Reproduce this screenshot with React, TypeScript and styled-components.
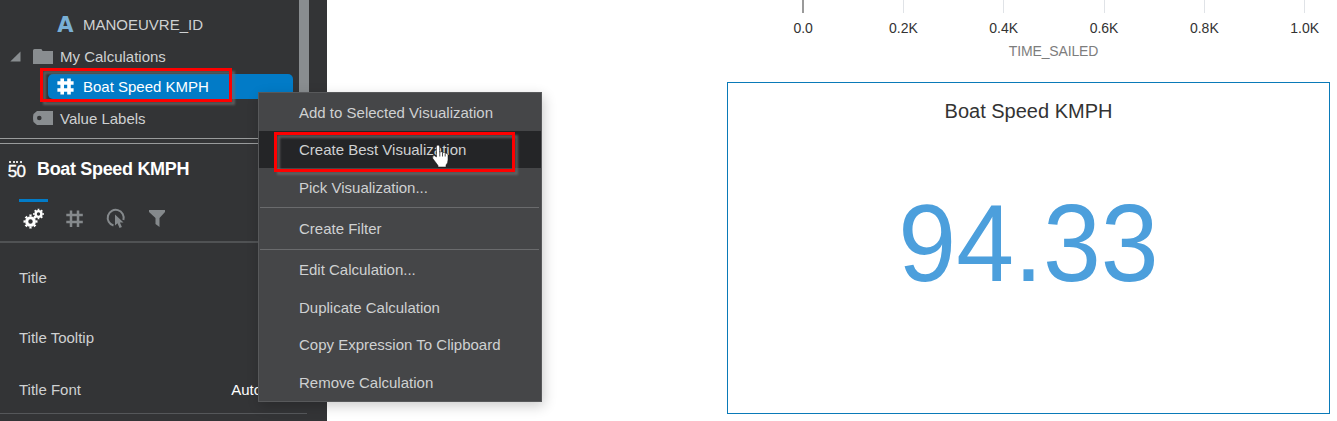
import React from "react";
import styled, { createGlobalStyle } from "styled-components";

const GlobalStyle = createGlobalStyle`
  * { box-sizing: border-box; }
  body { margin: 0; background: #fff; overflow: hidden; font-family: "Liberation Sans", Arial, sans-serif; font-size: 15px; }
  svg { display: block; flex: none; }
`;

const Page = styled.div`
  position: relative;
  display: flex;
  width: 1337px;
  height: 421px;
  overflow: hidden;
`;

const Sidebar = styled.aside`
  display: flex;
  flex-direction: column;
  width: 327px;
  height: 421px;
  background: #333436;
  overflow: hidden;
`;

const TreePanel = styled.div`
  display: flex;
  height: 139px;
  flex: none;
  border-bottom: 1px solid #999b9c;
`;

const Tree = styled.div`
  width: 299px;
  padding-top: 8px;
`;

const ScrollThumb = styled.div`
  width: 10px;
  background: #898d90;
`;

const TreeRow = styled.div<{ $indent: number; $height?: number }>`
  display: flex;
  align-items: center;
  height: ${(p) => p.$height ?? 32}px;
  padding-left: ${(p) => p.$indent}px;
  color: #cfd1d2;
`;

const TreeIcon = styled.span<{ $gap: number }>`
  display: flex;
  margin-right: ${(p) => p.$gap}px;
`;

const TextTypeIcon = styled.span`
  width: 17px;
  margin-right: 9px;
  text-align: center;
  font: bold 21px/20px "DejaVu Sans", sans-serif;
  color: #7ab0d6;
`;

const SelectedRow = styled.div`
  display: flex;
  align-items: center;
  width: 245px;
  height: 25px;
  margin: 2px 0 3px 48px;
  padding-left: 9px;
  border-radius: 5px;
  background: #027bc7;
  color: #fff;
`;

const Splitter = styled.div`
  height: 5px;
  flex: none;
  border-bottom: 1px solid #999b9c;
`;

const Heading = styled.div`
  display: flex;
  align-items: center;
  height: 51px;
  padding-left: 7px;
  flex: none;
  color: #fff;
  font-size: 18px;
  font-weight: bold;
  letter-spacing: -0.33px;
`;

const MetricIcon = styled.span`
  display: flex;
  flex-direction: column;
  align-items: center;
  width: 19px;
  margin-right: 11px;
  font-size: 17px;
  line-height: 13px;
  font-weight: normal;
  letter-spacing: -0.8px;
  -webkit-text-stroke: 0.3px #fff;
`;

const MetricDots = styled.i`
  width: 13px;
  height: 2px;
  margin: 0 3px 2px 0;
  background: repeating-linear-gradient(90deg, #ddd 0 2px, transparent 2px 3.6px);
`;

const TabBar = styled.div`
  display: flex;
  height: 48px;
  padding: 4px 0 0 19px;
  flex: none;
  border-bottom: 2px solid #505254;
`;

const Tab = styled.div<{ $active?: boolean }>`
  display: flex;
  justify-content: center;
  width: 29px;
  height: 42px;
  padding-top: 6px;
  margin-right: 12px;
  border-top: 3px solid ${(p) => (p.$active ? "#027bc7" : "transparent")};
  color: ${(p) => (p.$active ? "#fff" : "#85898c")};
`;

const Setting = styled.div<{ $height: number; $ruled?: boolean }>`
  display: flex;
  align-items: center;
  justify-content: space-between;
  width: 307px;
  height: ${(p) => p.$height}px;
  padding: ${(p) => (p.$ruled ? 2 : 0)}px 45px 0 19px;
  flex: none;
  border-bottom: ${(p) => (p.$ruled ? "1px solid #55575a" : "none")};
  color: #cfd1d2;
`;

const SettingValue = styled.span`
  color: #fff;
`;

const Canvas = styled.main`
  display: flex;
  flex-direction: column;
  flex: 1;
  min-width: 0;
  overflow: hidden;
`;

const Axis = styled.div`
  display: grid;
  grid-template-columns: repeat(6, 100.3px);
  margin-left: 426px;
  height: 42px;
`;

const Tick = styled.div<{ $strong?: boolean }>`
  display: flex;
  flex-direction: column;
  align-items: center;
  font-size: 14px;
  line-height: 16px;
  color: #333;
  &::before {
    content: "";
    width: ${(p) => (p.$strong ? 2 : 1)}px;
    height: 13px;
    margin-bottom: 7px;
    background: ${(p) => (p.$strong ? "#9a9a9a" : "#e0e3e7")};
  }
`;

const AxisTitle = styled.div`
  width: 603px;
  height: 40px;
  margin-left: 425px;
  text-align: center;
  font-size: 14px;
  line-height: 18px;
  letter-spacing: -0.15px;
  color: #7d7d7d;
`;

const Tile = styled.section`
  display: flex;
  flex-direction: column;
  align-items: center;
  width: 603px;
  height: 332px;
  margin-left: 400px;
  border: 1px solid #0a7ab8;
`;

const TileTitle = styled.div`
  margin-top: 16px;
  font-size: 20px;
  line-height: 24px;
  color: #333;
`;

const TileValue = styled.div`
  margin-top: 62px;
  font-size: 104px;
  line-height: 120px;
  color: #4c9fdc;
  transform: scaleY(1.045);
  transform-origin: 50% 94px;
`;

const Menu = styled.div`
  position: absolute;
  left: 258px;
  top: 92px;
  width: 284px;
  height: 310px;
  border: 1px solid #58595b;
  background: #454648;
  box-shadow: 2px 4px 12px rgba(0, 0, 0, 0.2);
`;

const MenuItem = styled.div<{ $active?: boolean }>`
  display: flex;
  align-items: center;
  height: 37.6px;
  padding: 1px 0 0 40px;
  background: ${(p) => (p.$active ? "#242527" : "transparent")};
  color: #cfd1d2;
`;

const MenuRule = styled.div`
  height: 1px;
  margin: 1px 2px 1px 1px;
  background: #6a6b6d;
  & ~ & {
    margin-top: 2.4px;
    margin-bottom: 0.6px;
  }
`;

const Highlight = styled.div<{ $x: number; $y: number; $w: number; $h: number }>`
  position: absolute;
  left: ${(p) => p.$x}px;
  top: ${(p) => p.$y}px;
  width: ${(p) => p.$w}px;
  height: ${(p) => p.$h}px;
  border: 3px solid #fe0000;
  filter: drop-shadow(3px 3px 1px rgba(105, 105, 105, 0.75));
`;

const Pointer = styled.svg`
  position: absolute;
  left: 432px;
  top: 144px;
`;

const Hash = ({ size, weight }: { size: number; weight: number }) => (
  <svg width={size} height={size} viewBox="0 0 17 17" fill="none" stroke="currentColor" strokeWidth={weight}>
    <path d="M5.2 .5v16M12 .5v16M.4 5h16.2M.4 12h16.2" />
  </svg>
);

const Gear = ({ x, y, r }: { x: number; y: number; r: number }) => (
  <g transform={`translate(${x} ${y})`} fill="none" stroke="#fff">
    <circle r={r * 0.56} strokeWidth={r * 0.46} />
    <circle r={r * 0.88} strokeWidth={r * 0.3} pathLength="16" strokeDasharray="1 1" strokeDashoffset=".5" />
  </g>
);

const ticks = ["0.0", "0.2K", "0.4K", "0.6K", "0.8K", "1.0K"];

export default function App() {
  return (
    <Page>
      <GlobalStyle />
      <Sidebar>
        <TreePanel>
          <Tree>
            <TreeRow $indent={57} $height={33}>
              <TextTypeIcon>A</TextTypeIcon>
              MANOEUVRE_ID
            </TreeRow>
            <TreeRow $indent={10} $height={31}>
              <TreeIcon $gap={12}>
                <svg width="11" height="11"><path d="M10.5 .5v10H.3z" fill="#898d90" /></svg>
              </TreeIcon>
              <TreeIcon $gap={7}>
                <svg width="20" height="15"><path d="M0 1.5Q0 0 1.5 0H8q1 0 1.5 2H20v13H0z" fill="#898d90" /></svg>
              </TreeIcon>
              My Calculations
            </TreeRow>
            <SelectedRow>
              <TreeIcon $gap={9}><Hash size={17} weight={3.6} /></TreeIcon>
              Boat Speed KMPH
            </SelectedRow>
            <TreeRow $indent={33}>
              <TreeIcon $gap={7}>
                <svg width="20" height="14">
                  <path d="M4 0h16v14H4L.5 11Q0 9 0 7t.5-4z" fill="#898d90" />
                  <circle cx="6.300" cy="7" r="2.300" fill="#333436" />
                </svg>
              </TreeIcon>
              Value Labels
            </TreeRow>
          </Tree>
          <ScrollThumb />
        </TreePanel>
        <Splitter />
        <Heading>
          <MetricIcon><MetricDots />50</MetricIcon>
          Boat Speed KMPH
        </Heading>
        <TabBar>
          <Tab $active>
            <svg width="22" height="22">
              <Gear x={7.5} y={13.5} r={6.8} />
              <Gear x={15.5} y={6} r={5.2} />
            </svg>
          </Tab>
          <Tab>
            <svg width="17" height="22" viewBox="0 -2.5 17 22" fill="none" stroke="currentColor" strokeWidth="2.5">
              <path d="M5 0v16.5M12 0v16.5M.3 4.5h16.5M.3 11.5h16.5" />
            </svg>
          </Tab>
          <Tab>
            <svg width="20" height="22" fill="none" stroke="currentColor" strokeWidth="2">
              <path d="M7.5 17.5A8 8 0 1 1 17.4 12" />
              <path d="M9 6.5v11l2.5-2.2 2 4.7 2.4-1-2-4.5h3.6z" fill="currentColor" stroke="none" />
            </svg>
          </Tab>
          <Tab>
            <svg width="16" height="22"><path d="M0 2h16v2l-5.5 6v9l-4-3v-6L0 4z" fill="currentColor" /></svg>
          </Tab>
        </TabBar>
        <Setting $height={69}>Title</Setting>
        <Setting $height={51}>Title Tooltip</Setting>
        <Setting $height={51} $ruled>
          <span>Title Font</span>
          <SettingValue>Auto</SettingValue>
        </Setting>
      </Sidebar>
      <Canvas>
        <Axis>
          {ticks.map((t, i) => <Tick key={t} $strong={i === 0}>{t}</Tick>)}
        </Axis>
        <AxisTitle>TIME_SAILED</AxisTitle>
        <Tile>
          <TileTitle>Boat Speed KMPH</TileTitle>
          <TileValue>94.33</TileValue>
        </Tile>
      </Canvas>
      <Highlight $x={40} $y={68} $w={192} $h={34} />
      <Menu>
        <MenuItem>Add to Selected Visualization</MenuItem>
        <MenuItem $active>Create Best Visualization</MenuItem>
        <MenuItem>Pick Visualization...</MenuItem>
        <MenuRule />
        <MenuItem>Create Filter</MenuItem>
        <MenuRule />
        <MenuItem>Edit Calculation...</MenuItem>
        <MenuItem>Duplicate Calculation</MenuItem>
        <MenuItem>Copy Expression To Clipboard</MenuItem>
        <MenuItem>Remove Calculation</MenuItem>
      </Menu>
      <Highlight $x={274} $y={132} $w={241} $h={40} />
      <Pointer width="18" height="25" viewBox="0 0 18 25">
        <path
          d="M4.5 2.5Q4.5 1 6 1t1.5 1.5V8q2.5-.8 3 .7 2-.7 2.6.7 2.9-.8 2.9 1.8V16q0 3-2 5V23H6v-1.5L.8 14.5Q0 11.5 2.3 11.6L4.5 13z"
          fill="#fff"
          stroke="#111"
          strokeWidth=".5"
        />
        <path d="M7.8 8v4.5M10.5 9v3.5M13.2 10v2.5" stroke="#222" strokeWidth=".8" />
      </Pointer>
    </Page>
  );
}
